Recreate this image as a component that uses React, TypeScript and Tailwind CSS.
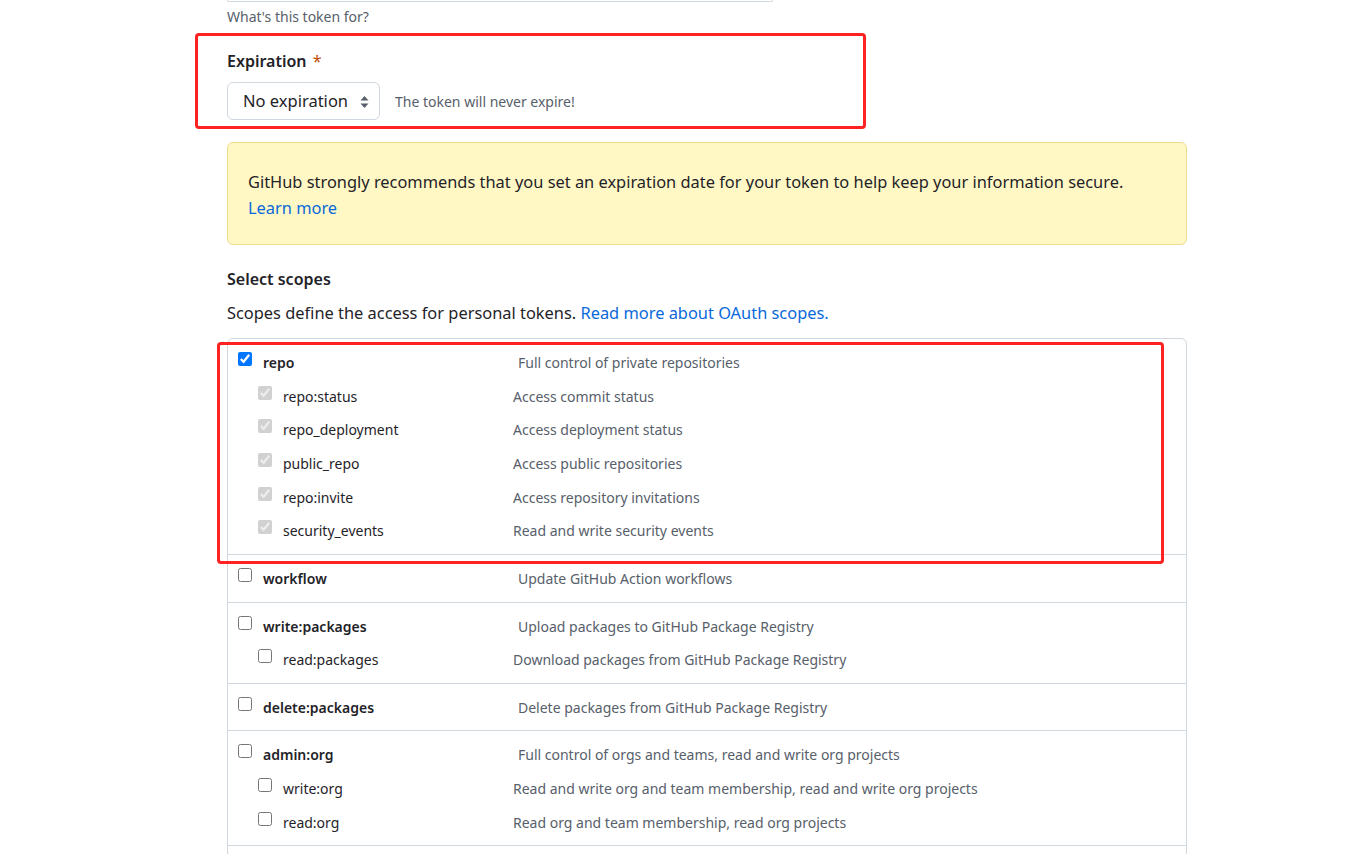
import React from "react";

type Child = [string, string];
type Group = { name: string; desc: string; checked?: boolean; children?: Child[] };

const groups: Group[] = [
  {
    name: "repo",
    desc: "Full control of private repositories",
    checked: true,
    children: [
      ["repo:status", "Access commit status"],
      ["repo_deployment", "Access deployment status"],
      ["public_repo", "Access public repositories"],
      ["repo:invite", "Access repository invitations"],
      ["security_events", "Read and write security events"],
    ],
  },
  { name: "workflow", desc: "Update GitHub Action workflows" },
  {
    name: "write:packages",
    desc: "Upload packages to GitHub Package Registry",
    children: [["read:packages", "Download packages from GitHub Package Registry"]],
  },
  { name: "delete:packages", desc: "Delete packages from GitHub Package Registry" },
  {
    name: "admin:org",
    desc: "Full control of orgs and teams, read and write org projects",
    children: [
      ["write:org", "Read and write org and team membership, read and write org projects"],
      ["read:org", "Read org and team membership, read org projects"],
    ],
  },
];

function Box({ checked, disabled }: { checked?: boolean; disabled?: boolean }) {
  return (
    <input
      type="checkbox"
      checked={!!checked}
      disabled={disabled}
      readOnly
      className="w-[14px] h-[14px] shrink-0 m-0 -mt-[1px]"
    />
  );
}

function ScopeGroup({ g, first }: { g: Group; first?: boolean }) {
  return (
    <div
      className={
        first
          ? "px-[10px] pt-[14px] pb-[12.6px] flex flex-col gap-[13.7px]"
          : "border-t border-[#d0d7de] px-[10px] pt-[14px] pb-[12.6px] flex flex-col gap-[13.6px]"
      }
    >
      <div className="flex items-start h-5">
        <div className="flex items-start w-[280px] shrink-0">
          <Box checked={g.checked} />
          <span className="ml-[11px] text-[14px] leading-5 font-semibold text-[#1f2328]">{g.name}</span>
        </div>
        <span className="text-[14px] leading-5 text-[#57606a]">{g.desc}</span>
      </div>
      {g.children?.map(([n, d]) => (
        <div key={n} className="flex items-start h-5 pl-5">
          <div className="flex items-start w-[255px] shrink-0">
            <Box checked={g.checked} disabled={g.checked} />
            <span className="ml-[11px] text-[14px] leading-5 text-[#1f2328]">{n}</span>
          </div>
          <span className="text-[14px] leading-5 text-[#57606a]">{d}</span>
        </div>
      ))}
    </div>
  );
}

export default function App() {
  return (
    <div className="relative min-h-screen h-[854px] overflow-hidden bg-white font-['Noto_Sans',sans-serif] text-[#1f2328]">
      <div className="ml-[227px] w-[960px]">
        <div className="w-[546px] h-[2px] border border-t-0 border-[#d0d7de] rounded-b-md" />
        <p className="mt-[5px] text-[14px] leading-5 text-[#57606a]">What's this token for?</p>

        <div className="mt-[22px]">
          <div className="text-[16px] leading-6 font-semibold">
            Expiration <span className="text-[#bc4c00] font-normal ml-0.5">*</span>
          </div>
          <div className="mt-[9px] flex items-center">
            <div className="w-[153px] h-[38px] border border-[#d0d7de] rounded-md bg-white flex items-center pl-[15px] pr-[10px] justify-between">
              <span className="text-[16.5px] text-[#1f2328]">No expiration</span>
              <svg width="9" height="14" viewBox="0 0 9 14" className="mt-[1px]">
                <path d="M4.5 1 L8.5 5.5 L0.5 5.5 Z" fill="#57606a" />
                <path d="M4.5 13 L8.5 8.5 L0.5 8.5 Z" fill="#57606a" />
              </svg>
            </div>
            <span className="ml-[15px] text-[14px] text-[#57606a]">The token will never expire!</span>
          </div>
        </div>

        <div className="mt-[22px] bg-[#fff8c5] border border-[#eedc8f] rounded-md px-5 pt-[26px] pb-[23px] text-[16.4px] leading-[26px]">
          <p>GitHub strongly recommends that you set an expiration date for your token to help keep your information secure.</p>
          <p className="text-[#0969da]">Learn more</p>
        </div>

        <h3 className="mt-[22px] text-[16px] leading-6 font-semibold">Select scopes</h3>
        <p className="mt-[10px] text-[16.4px] leading-6">
          Scopes define the access for personal tokens.{" "}
          <span className="text-[#0969da]">Read more about OAuth scopes.</span>
        </p>

        <div className="mt-[13px] border border-[#d0d7de] rounded-t-md">
          {groups.map((g, i) => (
            <ScopeGroup key={g.name} g={g} first={i === 0} />
          ))}
          <div className="border-t border-[#d0d7de] h-[40px]" />
        </div>
      </div>

      <div className="absolute left-[195px] top-[33px] w-[671px] h-[96px] border-[3px] border-[#ff2222] rounded-[4px] pointer-events-none" />
      <div className="absolute left-[217px] top-[342px] w-[947px] h-[222px] border-[3px] border-[#ff2222] rounded-[4px] pointer-events-none" />
    </div>
  );
}
